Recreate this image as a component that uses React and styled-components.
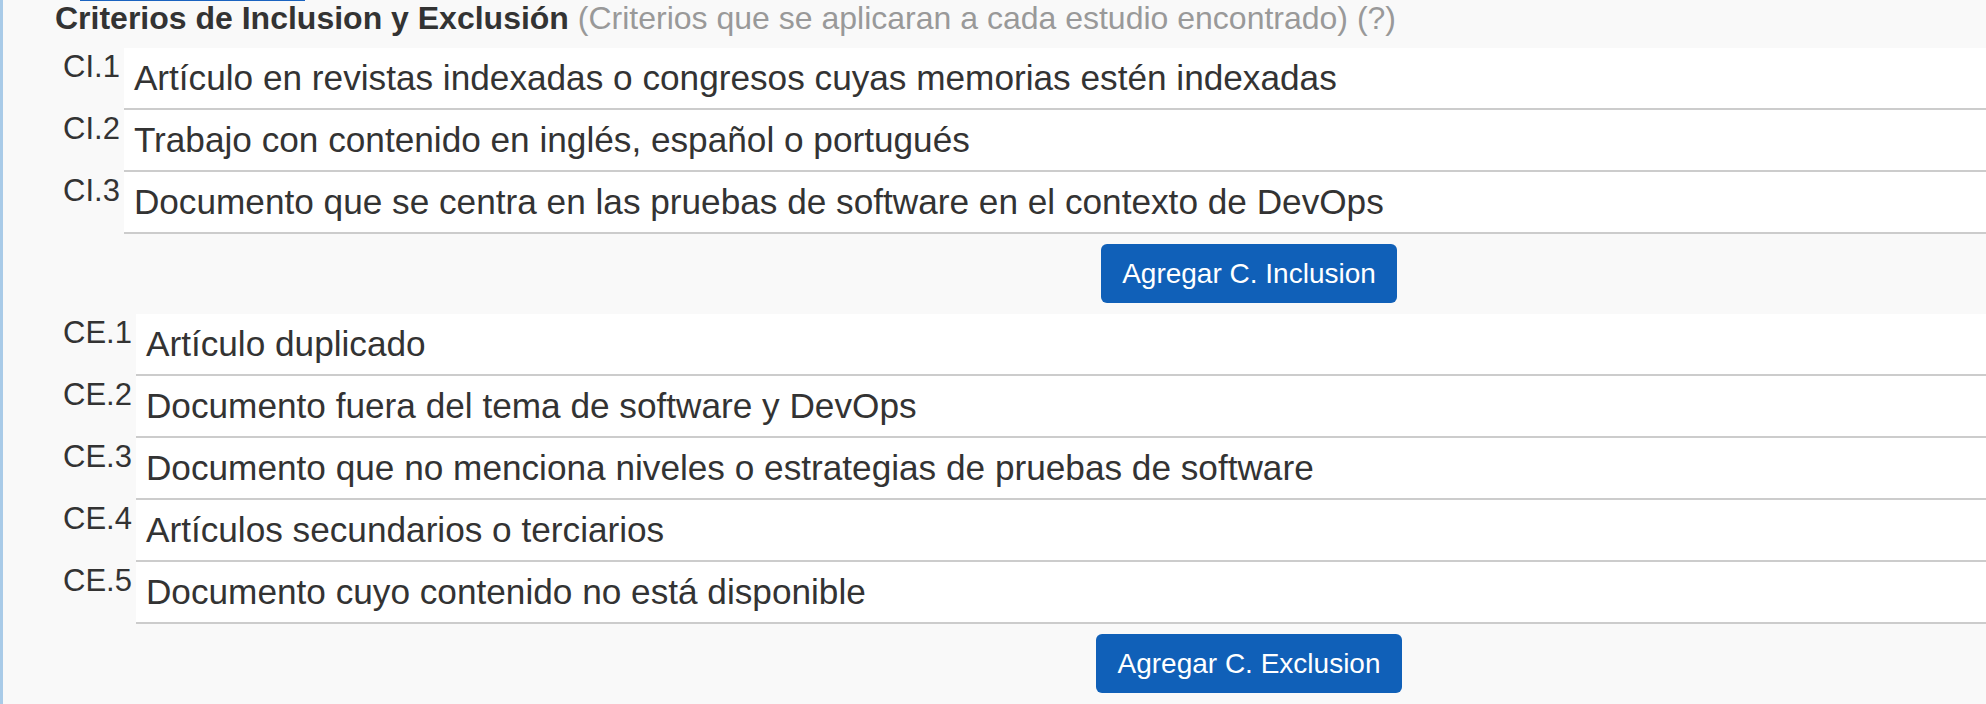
import React from "react";
import styled, { createGlobalStyle } from "styled-components";

const GlobalStyle = createGlobalStyle`
  body {
    margin: 0;
    background: #f9f9f9;
    font-family: "Liberation Sans", Arial, sans-serif;
    color: #333;
  }
`;

const Page = styled.div`
  display: flex;
  min-height: 704px;
  border-left: 3px solid #a9cbe8;
  overflow: hidden;
`;

const Content = styled.div`
  flex: 1;
  min-width: 0;
  padding-left: 52px;
`;

const TabEdge = styled.div`
  width: 225px;
  height: 1px;
  margin-left: 25px;
  background: #1a63c0;
`;

const Heading = styled.div`
  font-size: 32px;
  line-height: 34px;
  padding-bottom: 13px;
  white-space: nowrap;

  b {
    font-weight: bold;
    color: #333;
  }
`;

const Hint = styled.span`
  color: #999;
`;

const CriteriaList = styled.div`
  display: flex;
  flex-direction: column;
  padding-left: 8px;
`;

const Row = styled.div`
  display: flex;
  align-items: flex-start;
`;

const Code = styled.span`
  font-size: 31px;
  line-height: 33px;
  padding-top: 2px;
  margin-right: 4px;
  color: #333;
  white-space: nowrap;
`;

const Field = styled.div`
  flex: 1;
  min-width: 0;
  background: #fff;
  border-bottom: 2px solid #ccc;
  padding: 10px;
  font-size: 35.2px;
  line-height: 40px;
  color: #333;
  white-space: nowrap;
`;

const ButtonRow = styled.div`
  display: flex;
  justify-content: center;
  padding: 10px 0 11px 457px;
`;

const AddButton = styled.button`
  height: 59px;
  padding: 0 21px;
  border: none;
  border-radius: 6px;
  background: #1060b8;
  color: #fff;
  font-family: inherit;
  font-size: 28px;
  cursor: pointer;
`;

const inclusion = [
  "Artículo en revistas indexadas o congresos cuyas memorias estén indexadas",
  "Trabajo con contenido en inglés, español o portugués",
  "Documento que se centra en las pruebas de software en el contexto de DevOps"
];

const exclusion = [
  "Artículo duplicado",
  "Documento fuera del tema de software y DevOps",
  "Documento que no menciona niveles o estrategias de pruebas de software",
  "Artículos secundarios o terciarios",
  "Documento cuyo contenido no está disponible"
];

function CriteriaGroup({ prefix, items }) {
  return (
    <CriteriaList>
      {items.map((text, i) => (
        <Row key={i}>
          <Code>
            {prefix}.{i + 1}
          </Code>
          <Field>{text}</Field>
        </Row>
      ))}
    </CriteriaList>
  );
}

export default function App() {
  return (
    <>
      <GlobalStyle />
      <Page>
        <Content>
          <TabEdge />
          <Heading>
            <b>Criterios de Inclusion y Exclusión</b>{" "}
            <Hint>(Criterios que se aplicaran a cada estudio encontrado) (?)</Hint>
          </Heading>
          <CriteriaGroup prefix="CI" items={inclusion} />
          <ButtonRow>
            <AddButton>Agregar C. Inclusion</AddButton>
          </ButtonRow>
          <CriteriaGroup prefix="CE" items={exclusion} />
          <ButtonRow>
            <AddButton>Agregar C. Exclusion</AddButton>
          </ButtonRow>
        </Content>
      </Page>
    </>
  );
}
